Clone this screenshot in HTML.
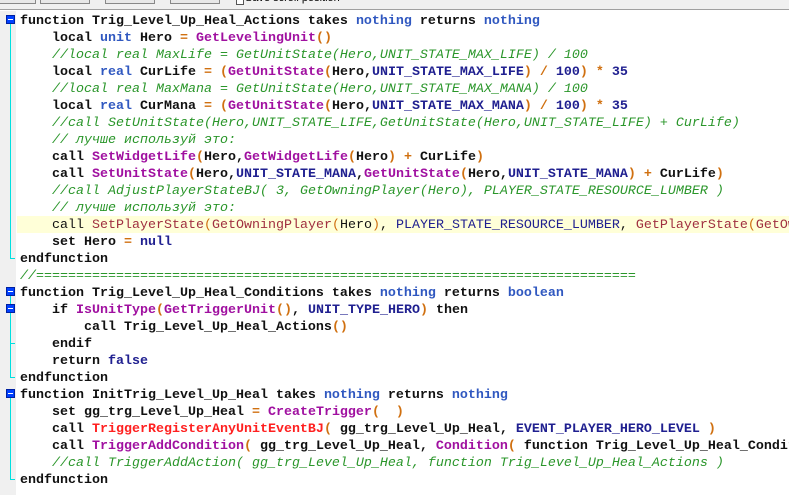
<!DOCTYPE html>
<html><head><meta charset="utf-8"><style>
html,body{margin:0;padding:0;width:789px;height:495px;overflow:hidden;background:#fff;}
#tb{position:absolute;left:0;top:0;width:789px;height:9px;background:#f0f0f0;border-bottom:1px solid #a0a0a0;}
.btn{position:absolute;top:0;height:3px;border:1px solid #888;border-top:none;background:#e8e8e8;}
#gut{position:absolute;left:0;top:11px;width:16px;height:484px;background:#f0f0f0;}
#wrap{position:absolute;left:20px;top:13px;width:769px;height:482px;overflow:hidden;}
pre{margin:0;font-family:"Liberation Mono",monospace;font-size:13.33px;line-height:17px;font-weight:bold;color:#111;}
.t{color:#3058c0}.n{color:#a010a0}.o{color:#d07010}.c{color:#202090}.m{color:#2a962a;font-style:italic;font-weight:normal}.r{color:#ff2020}
#hl{position:absolute;left:17px;top:216px;width:772px;height:17px;background:#ffffd8;}
.hln{font-weight:normal}
.hln .n{color:#a03040}
.mk{position:absolute;left:6px;width:9px;height:9px;background:#0040ff;border:1px solid #0020a0;box-sizing:border-box;}
.mk:after{content:"";position:absolute;left:1px;top:3px;width:5px;height:1px;background:#fff;}
.vl{position:absolute;left:10px;width:1px;background:#00e0e0;}
.tk{position:absolute;left:10px;width:5px;height:1px;background:#00e0e0;}
</style></head><body>
<div id="tb">
<div class="btn" style="left:-2px;width:36px"></div>
<div class="btn" style="left:40px;width:48px"></div>
<div class="btn" style="left:105px;width:48px"></div>
<div class="btn" style="left:170px;width:48px"></div>
<div style="position:absolute;left:236px;top:0;width:6px;height:4px;border:1px solid #555;border-top:none;background:#fff"></div>
<div style="position:absolute;left:245px;top:-8px;font:11px 'Liberation Sans',sans-serif;color:#000">Save scroll position</div>
</div>
<div id="gut"></div>
<div id="hl"></div>
<div class="vl" style="top:24px;height:234px"></div><div class="tk" style="top:258px"></div>
<div class="mk" style="top:15px"></div>
<div class="vl" style="top:296px;height:82px"></div><div class="tk" style="top:377px"></div>
<div class="tk" style="top:343px"></div>
<div class="mk" style="top:287px"></div>
<div class="mk" style="top:304px"></div>
<div class="vl" style="top:398px;height:82px"></div><div class="tk" style="top:479px"></div>
<div class="mk" style="top:389px"></div>
<div id="wrap"><pre>function Trig_Level_Up_Heal_Actions takes <span class="t">nothing</span> returns <span class="t">nothing</span>
    local <span class="t">unit</span> Hero <span class="o">=</span> <span class="n">GetLevelingUnit</span><span class="o">()</span>
    <span class="m">//local real MaxLife = GetUnitState(Hero,UNIT_STATE_MAX_LIFE) / 100</span>
    local <span class="t">real</span> CurLife <span class="o">=</span> <span class="o">(</span><span class="n">GetUnitState</span><span class="o">(</span>Hero,<span class="c">UNIT_STATE_MAX_LIFE</span><span class="o">)</span> <span class="o">/</span> <span class="c">100</span><span class="o">)</span> <span class="o">*</span> <span class="c">35</span>
    <span class="m">//local real MaxMana = GetUnitState(Hero,UNIT_STATE_MAX_MANA) / 100</span>
    local <span class="t">real</span> CurMana <span class="o">=</span> <span class="o">(</span><span class="n">GetUnitState</span><span class="o">(</span>Hero,<span class="c">UNIT_STATE_MAX_MANA</span><span class="o">)</span> <span class="o">/</span> <span class="c">100</span><span class="o">)</span> <span class="o">*</span> <span class="c">35</span>
    <span class="m">//call SetUnitState(Hero,UNIT_STATE_LIFE,GetUnitState(Hero,UNIT_STATE_LIFE) + CurLife)</span>
    <span class="m">// лучше используй это:</span>
    call <span class="n">SetWidgetLife</span><span class="o">(</span>Hero,<span class="n">GetWidgetLife</span><span class="o">(</span>Hero<span class="o">)</span> <span class="o">+</span> CurLife<span class="o">)</span>
    call <span class="n">SetUnitState</span><span class="o">(</span>Hero,<span class="c">UNIT_STATE_MANA</span>,<span class="n">GetUnitState</span><span class="o">(</span>Hero,<span class="c">UNIT_STATE_MANA</span><span class="o">)</span> <span class="o">+</span> CurLife<span class="o">)</span>
    <span class="m">//call AdjustPlayerStateBJ( 3, GetOwningPlayer(Hero), PLAYER_STATE_RESOURCE_LUMBER )</span>
    <span class="m">// лучше используй это:</span>
<span class="hln">    call <span class="n">SetPlayerState</span><span class="o">(</span><span class="n">GetOwningPlayer</span><span class="o">(</span>Hero<span class="o">)</span>, <span class="c">PLAYER_STATE_RESOURCE_LUMBER</span>, <span class="n">GetPlayerState</span><span class="o">(</span><span class="n">GetOwningPlayer</span></span>
    set Hero <span class="o">=</span> <span class="c">null</span>
endfunction
<span class="m">//===========================================================================</span>
function Trig_Level_Up_Heal_Conditions takes <span class="t">nothing</span> returns <span class="t">boolean</span>
    if <span class="n">IsUnitType</span><span class="o">(</span><span class="n">GetTriggerUnit</span><span class="o">()</span>, <span class="c">UNIT_TYPE_HERO</span><span class="o">)</span> then
        call Trig_Level_Up_Heal_Actions<span class="o">()</span>
    endif
    return <span class="c">false</span>
endfunction
function InitTrig_Level_Up_Heal takes <span class="t">nothing</span> returns <span class="t">nothing</span>
    set gg_trg_Level_Up_Heal <span class="o">=</span> <span class="n">CreateTrigger</span><span class="o">(  )</span>
    call <span class="r">TriggerRegisterAnyUnitEventBJ</span><span class="o">(</span> gg_trg_Level_Up_Heal, <span class="c">EVENT_PLAYER_HERO_LEVEL</span> <span class="o">)</span>
    call <span class="n">TriggerAddCondition</span><span class="o">(</span> gg_trg_Level_Up_Heal, <span class="n">Condition</span><span class="o">(</span> function Trig_Level_Up_Heal_Conditions <span class="o">) )</span>
    <span class="m">//call TriggerAddAction( gg_trg_Level_Up_Heal, function Trig_Level_Up_Heal_Actions )</span>
endfunction</pre></div>
</body></html>
